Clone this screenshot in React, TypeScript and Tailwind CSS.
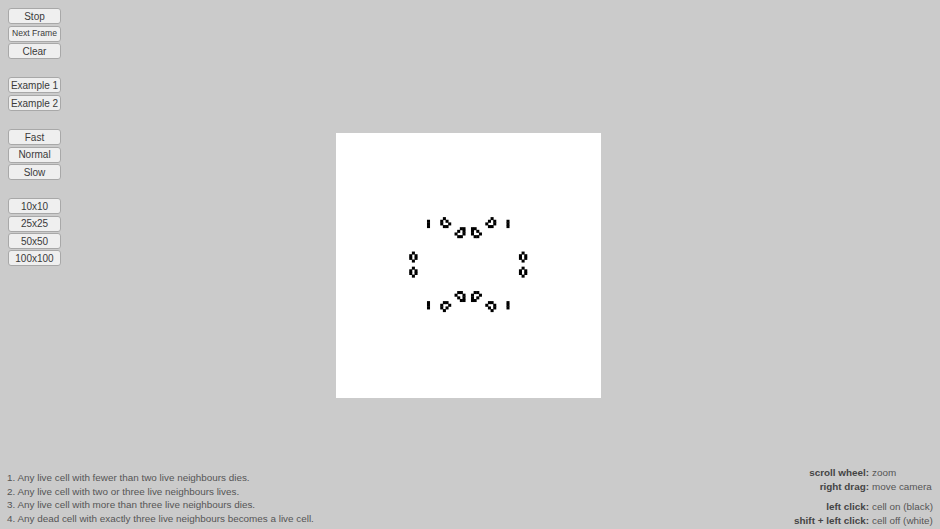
const groups = [
  ["Stop", "Next Frame", "Clear"],
  ["Example 1", "Example 2"],
  ["Fast", "Normal", "Slow"],
  ["10x10", "25x25", "50x50", "100x100"],
];

const rules = [
  "1. Any live cell with fewer than two live neighbours dies.",
  "2. Any live cell with two or three live neighbours lives.",
  "3. Any live cell with more than three live neighbours dies.",
  "4. Any dead cell with exactly three live neighbours becomes a live cell.",
];

const CELL = 2.65;

// top left quarter of the pattern, mirrored into the other three
const quarter: [number, number][] = [
  // blinker
  [-15, -17], [-15, -16], [-15, -15],
  // loaf, outer
  [-9, -18], [-10, -17], [-8, -17], [-10, -16], [-7, -16], [-9, -15], [-8, -15],
  // inner ring
  [-2.6, -14.2], [-1.6, -14.2], [-3.6, -13.2], [-1.6, -13.2], [-4.6, -12.2], [-1.6, -12.2],
  [-3.6, -11.2], [-2.6, -11.2],
  // beehive
  [-20.7, -5], [-21.7, -4], [-19.7, -4], [-21.7, -3], [-19.7, -3], [-20.7, -2],
];

function Board() {
  const cx = 132.25;
  const cy = 132;
  const cells: [number, number][] = [];
  quarter.forEach(([x, y]) => {
    cells.push([x, y], [-x, y], [x, -y - 1.3], [-x, -y - 1.3]);
  });
  return (
    <div className="ml-[336px] mt-[133px] h-[265px] w-[265px] bg-white self-start justify-self-start [grid-area:1/1]">
      <svg width="265" height="265" viewBox="0 0 265 265">
        {cells.map(([x, y], i) => (
          <rect
            key={i}
            x={cx + (x - 0.5) * CELL - 0.2}
            y={cy + y * CELL - 0.2}
            width={CELL + 0.4}
            height={CELL + 0.4}
            fill="#000"
          />
        ))}
      </svg>
    </div>
  );
}

function Btn({ label }: { label: string }) {
  return (
    <button
      className={
        "h-[16px] w-[53px] rounded-[3px] border border-[#a8a8a8] bg-[#efefef] text-center text-[#3a3a3a] leading-none whitespace-nowrap " +
        (label === "Next Frame" ? "text-[8.6px]" : "pt-[1.5px] text-[10px]")
      }
    >
      {label}
    </button>
  );
}

function Help({ label, value }: { label: string; value: string }) {
  return (
    <>
      <b className="text-right text-[#444] whitespace-nowrap">{label}</b>
      <span className="whitespace-nowrap">{value}</span>
    </>
  );
}

export default function App() {
  return (
    <div className="grid h-[529px] w-[940px] overflow-hidden bg-[#cbcbcb] font-['Liberation_Sans',Arial,sans-serif]">
      <div className="flex flex-col gap-[18.5px] pl-2 pt-[8.4px] self-start justify-self-start [grid-area:1/1]">
        {groups.map((g, i) => (
          <div key={i} className="flex flex-col gap-[1.3px]">
            {g.map((b) => (
              <Btn key={b} label={b} />
            ))}
          </div>
        ))}
      </div>

      <Board />

      <div className="pl-[7px] pb-[4px] text-[9.9px] leading-[13.4px] text-[#555] self-end justify-self-start [grid-area:1/1]">
        {rules.map((r) => (
          <div key={r}>{r}</div>
        ))}
      </div>

      <div className="flex flex-col gap-[6px] pr-[8px] pb-[1px] text-[9.9px] leading-[14px] text-[#555] self-end justify-self-end [grid-area:1/1]">
        <div className="grid grid-cols-[76px_60px] gap-x-[3px]">
          <Help label="scroll wheel:" value="zoom" />
          <Help label="right drag:" value="move camera" />
        </div>
        <div className="grid grid-cols-[76px_60px] gap-x-[3px]">
          <Help label="left click:" value="cell on (black)" />
          <Help label="shift + left click:" value="cell off (white)" />
        </div>
      </div>
    </div>
  );
}
